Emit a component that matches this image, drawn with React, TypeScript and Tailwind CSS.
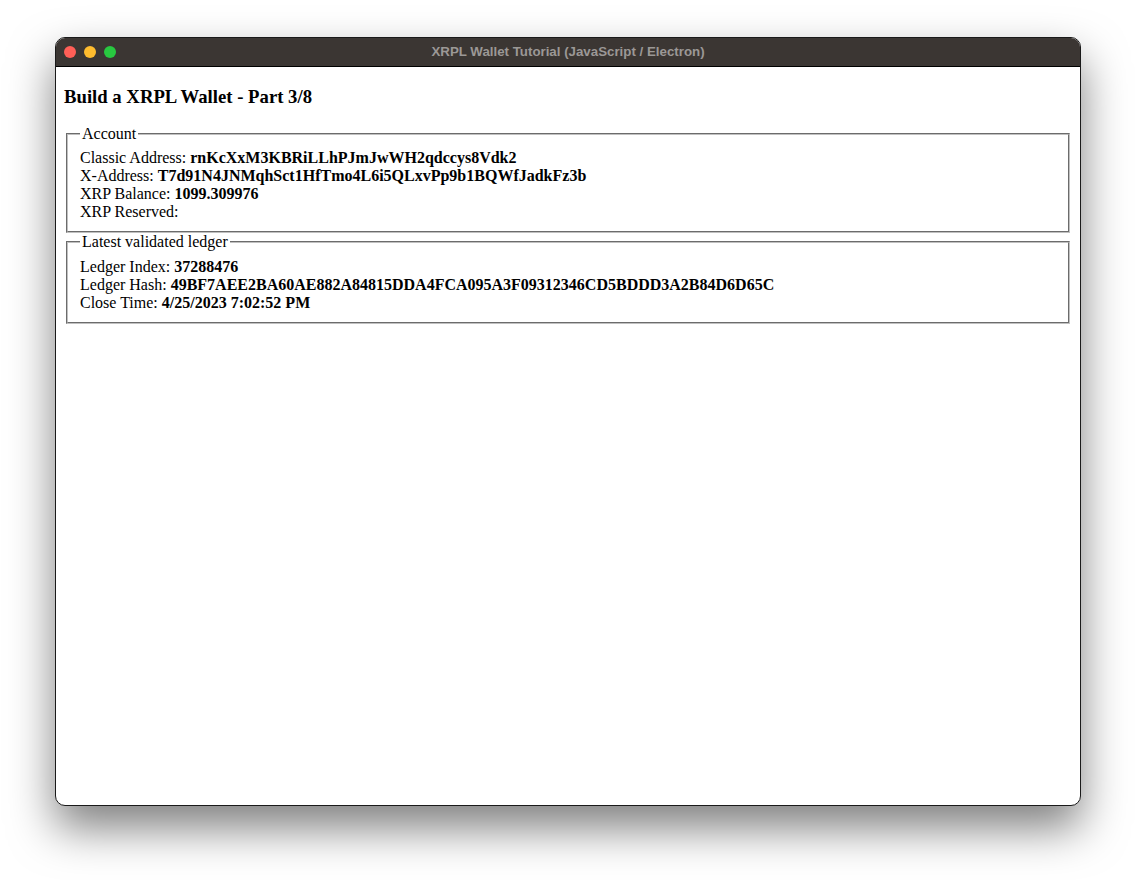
import React from 'react';

const serif = "font-['Liberation_Serif','Times_New_Roman',serif]";

interface RowProps {
  label: string;
  value?: string;
}

const Row = ({ label, value }: RowProps) => (
  <div className="leading-[18px]">
    {label}: {value && <b className="font-bold">{value}</b>}
  </div>
);

interface BoxProps {
  title: string;
  children: React.ReactNode;
}

const Box = ({ title, children }: BoxProps) => (
  <fieldset className="mx-[2px] border-2 [border-style:groove] border-[#c0c0c0] px-3 pt-[6.6px] pb-[10px]">
    <legend className="px-[2px] leading-[18px]">{title}</legend>
    {children}
  </fieldset>
);

export default function App() {
  return (
    <div className="w-[1136px] h-[880px] bg-white pt-[37px] pl-[55px]">
      <div className="w-[1026px] h-[769px] rounded-[10px] border border-[#1a1a1a] bg-white overflow-hidden flex flex-col shadow-[0_22px_45px_rgba(0,0,0,0.5)]">
        {/* title bar */}
        <div className="relative h-[29px] shrink-0 bg-[#3b3633] border-b border-black flex items-center justify-center">
          <div className="absolute left-[8px] top-[8px] flex gap-[8px]">
            <span className="w-[12px] h-[12px] rounded-full bg-[#ff5f57]" />
            <span className="w-[12px] h-[12px] rounded-full bg-[#febc2e]" />
            <span className="w-[12px] h-[12px] rounded-full bg-[#28c840]" />
          </div>
          <span className="font-['Liberation_Sans',Arial,sans-serif] text-[13.3px] font-bold text-[#9b9896]">
            XRPL Wallet Tutorial (JavaScript / Electron)
          </span>
        </div>

        {/* page */}
        <div className={`flex-1 px-2 text-[16px] text-black ${serif}`}>
          <h3 className="mt-[18.7px] mb-[17.5px] text-[18.72px] font-bold leading-[21.5px]">
            Build a XRPL Wallet - Part 3/8
          </h3>
          <Box title="Account">
            <Row label="Classic Address" value="rnKcXxM3KBRiLLhPJmJwWH2qdccys8Vdk2" />
            <Row label="X-Address" value="T7d91N4JNMqhSct1HfTmo4L6i5QLxvPp9b1BQWfJadkFz3b" />
            <Row label="XRP Balance" value="1099.309976" />
            <Row label="XRP Reserved" />
          </Box>
          <Box title="Latest validated ledger">
            <Row label="Ledger Index" value="37288476" />
            <Row label="Ledger Hash" value="49BF7AEE2BA60AE882A84815DDA4FCA095A3F09312346CD5BDDD3A2B84D6D65C" />
            <Row label="Close Time" value="4/25/2023 7:02:52 PM" />
          </Box>
        </div>
      </div>
    </div>
  );
}
